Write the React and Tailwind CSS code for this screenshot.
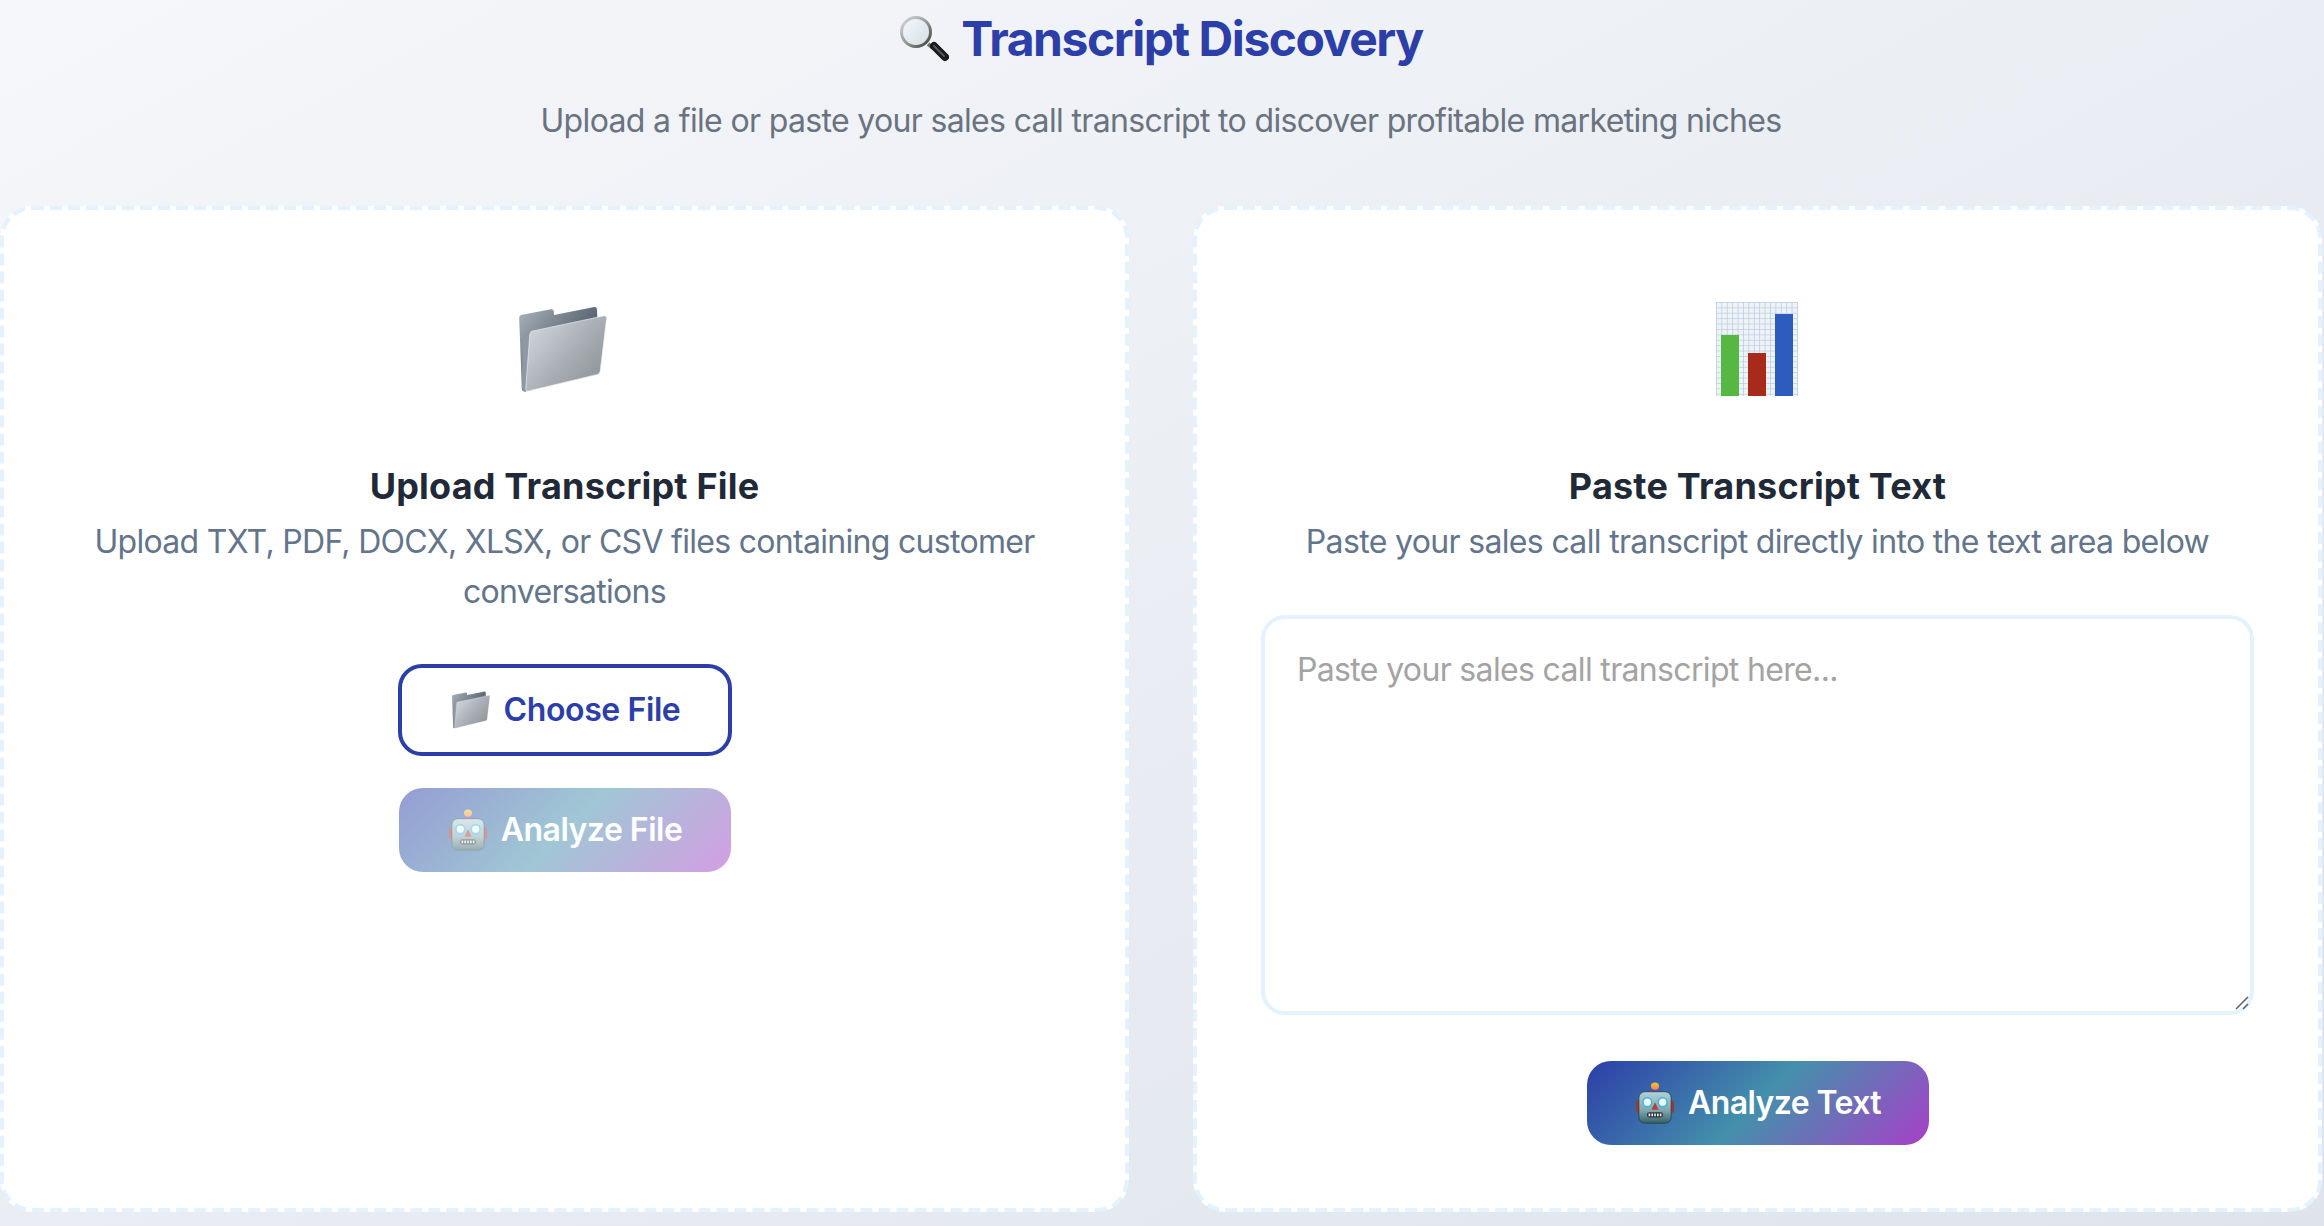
import React from 'react';

const Folder = ({ className }) => (
    <svg className={className} viewBox="0 0 264 262" aria-hidden="true">
        <defs>
            <linearGradient id="folderFront" x1="0.1" y1="0.2" x2="0.9" y2="0.85">
                <stop offset="0" stopColor="#ccd0d7" />
                <stop offset="0.55" stopColor="#a8adb3" />
                <stop offset="1" stopColor="#8f9599" />
            </linearGradient>
            <linearGradient id="folderBack" x1="0" y1="0" x2="0.6" y2="0.5">
                <stop offset="0" stopColor="#a9b2bc" />
                <stop offset="1" stopColor="#5e6a76" />
            </linearGradient>
        </defs>
        <path d="M6 27 L96 10 Q103 9 104 16 L105 27 L226 3 Q234 2 234 9 L236 40 L60 240 L18 258 Q8 258 8 248 L0 36 Q0 29 6 27 Z" fill="url(#folderBack)" />
        <path d="M8 240 Q10 258 18 258 L34 226 L30 90 L12 90 Z" fill="#8e99a4" />
        <path d="M38 76 L254 30 Q264 28 263 38 L244 196 Q243 204 236 206 L28 256 Q18 258 20 248 L32 86 Q33 78 38 76 Z" fill="url(#folderFront)" stroke="#eceff2" strokeWidth="2" />
    </svg>
);

const Robot = ({ className }) => (
    <svg className={className} viewBox="0 0 100 104" aria-hidden="true">
        <defs>
            <linearGradient id="robotFace" x1="0" y1="0" x2="0" y2="1">
                <stop offset="0" stopColor="#b3d0d8" />
                <stop offset="0.6" stopColor="#7ea7ae" />
                <stop offset="1" stopColor="#365f69" />
            </linearGradient>
            <linearGradient id="robotTop" x1="0" y1="0" x2="0" y2="1">
                <stop offset="0" stopColor="#f6c342" />
                <stop offset="1" stopColor="#ee8c35" />
            </linearGradient>
        </defs>
        <rect x="3" y="46" width="12" height="30" rx="4" fill="#a9322c" />
        <rect x="85" y="46" width="12" height="30" rx="4" fill="#a9322c" />
        <rect x="37" y="14" width="26" height="16" rx="8" fill="#5a4fb0" />
        <ellipse cx="50" cy="10" rx="10" ry="9" fill="url(#robotTop)" />
        <rect x="10" y="24" width="80" height="78" rx="15" fill="url(#robotFace)" stroke="#1f3f49" strokeWidth="2" />
        <circle cx="31" cy="50" r="11" fill="#eaf9fd" stroke="#42b4df" strokeWidth="4" />
        <circle cx="69" cy="50" r="11" fill="#eaf9fd" stroke="#42b4df" strokeWidth="4" />
        <path d="M50 50 L59 69 H41 Z" fill="#b5413c" />
        <rect x="30" y="75" width="40" height="13" rx="6" fill="#2c3336" />
        <path d="M36 78 V85 M43 78 V85 M50 78 V85 M57 78 V85 M64 78 V85" stroke="#eef0f0" strokeWidth="4" />
    </svg>
);

const Magnifier = ({ className }) => (
    <svg className={className} viewBox="0 0 50 48" aria-hidden="true">
        <defs>
            <linearGradient id="lensRing" x1="0" y1="0" x2="1" y2="1">
                <stop offset="0" stopColor="#d5dbe2" />
                <stop offset="0.5" stopColor="#9a9a96" />
                <stop offset="1" stopColor="#3d3d3a" />
            </linearGradient>
            <linearGradient id="lensGlass" x1="0" y1="0" x2="1" y2="1">
                <stop offset="0" stopColor="#f4f9fd" />
                <stop offset="1" stopColor="#d6dee4" />
            </linearGradient>
        </defs>
        <path d="M29 29 L34 33" stroke="#77736b" strokeWidth="4" />
        <path d="M35 31 L46 42" stroke="#1b1b1d" strokeWidth="8" strokeLinecap="round" />
        <path d="M35 31 L45 41" stroke="#55585c" strokeWidth="2" strokeLinecap="round" />
        <circle cx="17" cy="17" r="14.5" fill="url(#lensGlass)" stroke="url(#lensRing)" strokeWidth="3" />
    </svg>
);

const Chart = ({ className }) => (
    <svg className={className} viewBox="0 0 82 94" aria-hidden="true">
        <defs>
            <pattern id="chartGrid" width="5.4" height="5.4" patternUnits="userSpaceOnUse">
                <path d="M5.4 0 H0 V5.4" fill="none" stroke="#b3cee8" strokeWidth="1.5" />
            </pattern>
        </defs>
        <rect width="82" height="94" fill="#f0f2f4" />
        <rect width="82" height="94" fill="url(#chartGrid)" />
        <rect x="5" y="33" width="18" height="61" fill="#55b843" />
        <rect x="32" y="51" width="18" height="43" fill="#a82a1b" />
        <rect x="59" y="12" width="18" height="82" fill="#2c5cbd" />
    </svg>
);

// 6px dashes give the long dash of the design, the inner panel covers their inner 2px
const Card = ({ children, className }) => (
    <div className="flex-1 min-w-0 flex bg-white border-[6px] border-dashed border-[#e3f2fd] rounded-[32px]">
        <div className={`flex-1 min-w-0 -m-[2px] bg-white rounded-[28px] px-16 flex flex-col items-center text-center ${className}`}>
            {children}
        </div>
    </div>
);

const App = () => {
    return (
        <div
            className="w-[2324px] h-[1226px] overflow-hidden bg-gradient-to-br from-[#f5f7fa] to-[#dfe4ec] pr-[2px] text-center"
            style={{ fontFamily: 'Inter, "Liberation Sans", sans-serif' }}
        >
            <h1 className="h-[78px] mb-[2px] flex items-center justify-center gap-3 text-[48px] font-bold tracking-[-1.45px] text-[#2c3ea8]">
                <Magnifier className="w-[50px] h-[48px]" />
                <span>Transcript Discovery</span>
            </h1>
            <p className="h-[82px] pt-[20px] text-[32px] leading-[42px] tracking-[-0.66px] text-[#6b7280]">
                Upload a file or paste your sales call transcript to discover profitable marketing niches
            </p>

            <div className="h-[1006px] mt-[44px] flex gap-16">
                <Card className="pt-[96px]">
                    <Folder className="w-[88px] h-[87px] -ml-[3px]" />
                    <h3 className="mt-[66px] text-[36px] leading-[54px] font-bold tracking-[0.2px] text-[#1f2937]">Upload Transcript File</h3>
                    <p className="mt-[4px] text-[32px] leading-[50px] tracking-[-0.7px] text-[#64748b]">
                        Upload TXT, PDF, DOCX, XLSX, or CSV files containing customer conversations
                    </p>
                    <button className="mt-[47px] w-[334px] h-[92px] flex items-center justify-center gap-[14px] bg-white border-4 border-[#2c3ea8] rounded-[24px] text-[32px] font-semibold tracking-[-0.4px] text-[#2c3ea8]">
                        <Folder className="w-[38px] h-[38px] ml-[3px]" />
                        Choose File
                    </button>
                    <button className="mt-[32px] w-[332px] h-[84px] flex items-center justify-center gap-[12px] rounded-[24px] text-[32px] font-semibold tracking-[-0.5px] text-white opacity-50 bg-[linear-gradient(135deg,#2c3ea8_0%,#4490ab_50%,#a83fc9_100%)]">
                        <Robot className="w-[42px] h-[42px]" />
                        Analyze File
                    </button>
                </Card>
                <Card className="pt-[92px]">
                    <Chart className="w-[82px] h-[94px] -ml-[2px]" />
                    <h3 className="mt-[63px] text-[36px] leading-[54px] font-bold tracking-[0.2px] text-[#1f2937]">Paste Transcript Text</h3>
                    <p className="mt-[4px] text-[32px] leading-[50px] tracking-[-0.66px] text-[#64748b]">
                        Paste your sales call transcript directly into the text area below
                    </p>
                    <div className="relative mt-[48px] w-full h-[400px] shrink-0">
                        <textarea
                            className="block w-full h-full resize-none px-[32px] py-[30px] border-4 border-[#e3f2fd] rounded-[24px] text-[32px] leading-[42px] tracking-[-0.66px] outline-none placeholder:text-[#a3a3a3]"
                            placeholder="Paste your sales call transcript here..."
                        />
                        <svg className="absolute right-[5px] bottom-[5px] w-[14px] h-[14px]" viewBox="0 0 14 14" aria-hidden="true">
                            <path d="M1 13 L13 1 M8 13 L13 8" stroke="#666" strokeWidth="1.6" />
                        </svg>
                    </div>
                    <button className="mt-[46px] w-[342px] h-[84px] flex items-center justify-center gap-[12px] rounded-[24px] text-[32px] font-semibold tracking-[-0.6px] text-white bg-[linear-gradient(135deg,#2c3ea8_0%,#4490ab_50%,#a83fc9_100%)]">
                        <Robot className="w-[42px] h-[42px]" />
                        Analyze Text
                    </button>
                </Card>
            </div>
        </div>
    );
};

export default App;
